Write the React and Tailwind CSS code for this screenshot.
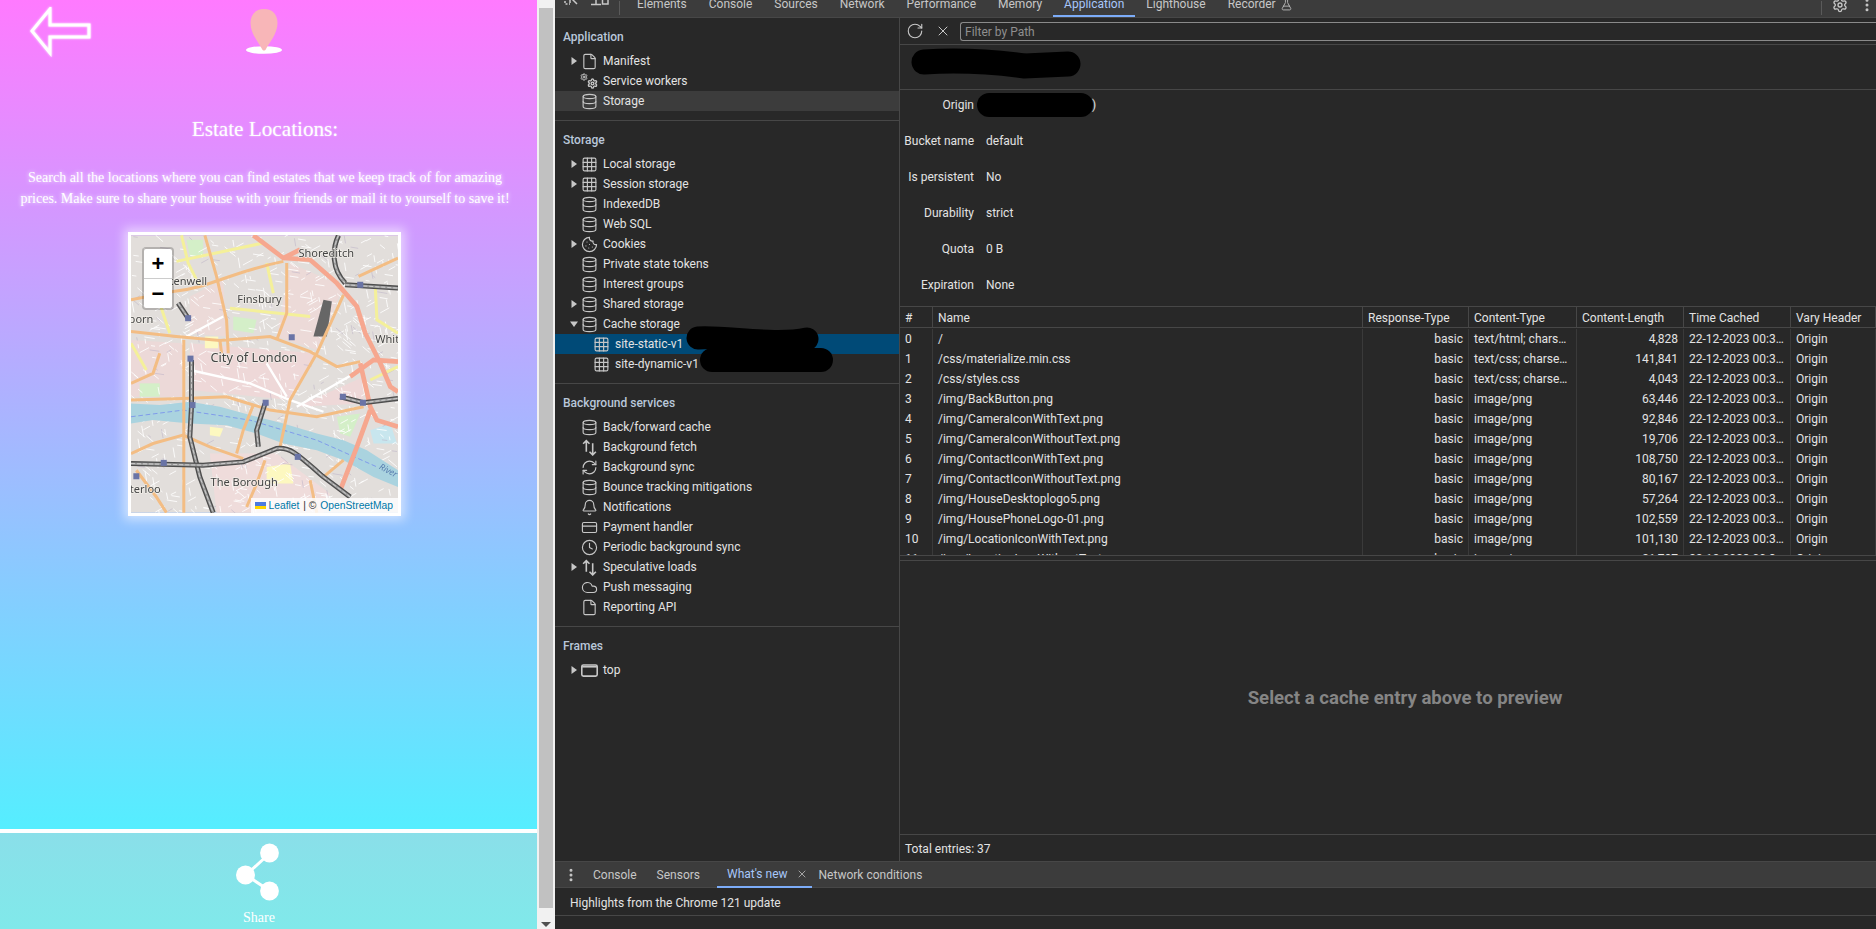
import React from 'react';
import {
    Database, Grid3x3, File, Cookie, Bell, CreditCard, Clock, Cloud, RefreshCw,
    Settings, EllipsisVertical, RotateCw, X, FlaskConical,
} from 'lucide-react';

// left page: back arrow and location pin are pictures in the original
const BackArrow = () => (
    <svg width="62" height="50" viewBox="0 0 62 50" className="drop-shadow-[0_0_1px_white]">
        <path d="M2 24 L20 2 L20 18 L59 18 L59 30 L20 30 L20 46 Z" fill="none" stroke="white" strokeWidth="3" />
    </svg>
);

const Pin = () => (
    <svg width="38" height="46" viewBox="0 0 38 46">
        <ellipse cx="19" cy="41" rx="18" ry="3.8" fill="white" />
        <path d="M19 0 C28 0 32.5 6 32.5 14 C32.5 25 24 34 21 40 C20 42 18 42 17 40 C14 34 5.5 25 5.5 14 C5.5 6 10 0 19 0 Z" fill="#f8b6b8" />
    </svg>
);

const ShareIcon = () => (
    <svg width="46" height="60" viewBox="0 0 46 60">
        <path d="M10 32 L34 10 M10 32 L34 48" stroke="white" strokeWidth="3" />
        <circle cx="33.5" cy="10" r="9.4" fill="white" />
        <circle cx="9.5" cy="32" r="9.5" fill="white" />
        <circle cx="33.5" cy="48" r="9.4" fill="white" />
    </svg>
);

// tile picture, drawn in the coordinates of a 3x crop of the map
const ORANGE = [
    'M64 335 L200 350 L330 362 L480 350 L600 395 L680 440 L750 425',
    'M64 240 L190 215 C300 205 350 160 520 125',
    'M285 47 L320 170 L350 300 L355 400',
    'M530 130 L530 280 L500 360',
    'M700 225 L620 400 L540 540 L510 680',
    'M64 540 L220 535 L350 530 L480 570 L620 590 L760 560',
    'M430 555 L400 630 L380 700',
    'M222 360 L222 877',
    'M64 700 L130 670 L220 645 L300 680 L400 715',
    'M150 400 L130 460 L64 490',
    'M465 720 L440 790 L410 860',
    'M80 750 L140 830 L170 877',
    'M600 780 L620 877',
    'M745 170 L863 115',
    'M330 360 L335 400',
    'M700 720 L640 770',
];
const YELLOW = [
    'M215 47 L235 130 L270 200',
    'M200 125 L460 70',
    'M470 130 L490 220',
    'M360 265 L600 290',
    'M795 200 L800 300 L863 340',
    'M150 250 L180 340',
    'M64 370 L110 450',
    'M780 480 L863 440',
];
const SALMON = [
    'M430 47 L520 115 L600 120 L680 190 L740 260 L765 340 L810 430 L840 500 L863 515',
    'M863 425 L790 420 L720 470',
    'M750 430 L780 560 L800 600 L863 620',
    'M780 570 L740 680 L690 810',
    'M520 115 L570 90',
];
const RAIL = [
    'M685 47 C665 90 665 150 705 190',
    'M705 195 L863 205',
    'M205 250 L235 295',
    'M245 420 L245 560 L240 650 L270 770 L310 877',
    'M64 730 L160 732 L280 735 L400 725 L500 685 C540 680 560 700 640 770 L720 830',
    'M465 550 L440 630 L445 680',
    'M690 530 L760 548 L863 535',
];
const STATIONS = [[750, 195], [235, 295], [545, 352], [242, 416], [248, 555], [467, 548], [698, 530], [758, 548], [563, 710], [162, 728], [80, 768]];
const PATCHES = [
    ['#ecd9d8', 'M64 360 L220 370 L220 530 L64 530 Z'],
    ['#eed8d8', 'M240 370 L620 400 L540 540 L240 510 Z'],
    ['#ecdad8', 'M540 130 L700 200 L620 390 L500 350 Z'],
    ['#ecdad8', 'M240 230 L340 180 L350 350 L240 340 Z'],
    ['#eed8d8', 'M560 560 L760 470 L760 550 Z'],
    ['#efdcdb', 'M300 700 L500 700 L660 820 L640 877 L320 877 Z'],
    ['#d4efc8', 'M680 590 L750 580 L720 650 L690 640 Z'],
    ['#d4efc8', 'M370 290 L440 300 L430 340 L370 330 Z'],
    ['#d4efc8', 'M90 490 L150 490 L150 530 L90 530 Z'],
    ['#d4efc8', 'M230 60 L280 60 L280 110 L240 110 Z'],
    ['#fdf8c0', 'M470 740 L540 730 L550 790 L470 790 Z'],
    ['#fdf8c0', 'M285 350 L325 350 L325 385 L285 385 Z'],
    ['#fdf8c0', 'M300 620 L340 625 L330 650 L300 645 Z'],
    ['#c8e6ee', 'M780 630 L840 610 L860 670 L790 670 Z'],
];

// fixed little street net, same every run
const makeStreets = () => {
    let seed = 17;
    const rnd = () => {
        seed = (seed * 16807) % 2147483647;
        return seed / 2147483647;
    };
    const lines = [];
    for (let i = 0; i < 800; i++) {
        const x = 64 + rnd() * 799;
        const y = 47 + rnd() * 830;
        const len = 10 + rnd() * 24;
        const a = [0.15, 1.4, 0.7, -0.5][Math.floor(rnd() * 4)];
        lines.push(`M${x.toFixed(0)} ${y.toFixed(0)} l${(Math.cos(a) * len).toFixed(0)} ${(Math.sin(a) * len).toFixed(0)}`);
    }
    return lines;
};
const STREETS = makeStreets();
const RIVER = 'M64 550 L150 555 L240 545 L330 560 L420 585 L520 610 L620 640 L700 660 L770 690 L863 750 L863 800 L790 770 L700 720 L620 690 L520 670 L440 640 L350 615 L240 610 L130 600 L64 610 Z';

const MapLabel = ({ x, y, size = 33, children }) => (
    <text x={x} y={y} fontSize={size} fill="#444" stroke="#f2efe9" strokeWidth="4" paintOrder="stroke" fontFamily="'Noto Sans', sans-serif">{children}</text>
);

const MapTiles = () => (
    <svg viewBox="64 47 799 830" className="block w-[267px] h-[278px] blur-[0.35px]">
        <rect x="64" y="47" width="799" height="830" fill="#e2dedb" />
        {PATCHES.map(([fill, d], i) => <path key={i} d={d} fill={fill} />)}
        {STREETS.map((d, i) => {
            const footpath = i % 9 === 0;
            return <path key={i} d={d} stroke={footpath ? '#b9aec4' : 'white'} strokeWidth={footpath ? 1.5 : 2.5} fill="none" />;
        })}
        <path d={RIVER} fill="#aad3df" />
        <path d="M64 590 L220 570 L420 600 L620 660 L800 740" fill="none" stroke="#6b7ff0" strokeWidth="2" strokeDasharray="14 8" />
        <path d="M230 350 L340 290 M240 450 L420 490 L540 540 L640 575 M560 560 L750 450 M470 430 L530 530" stroke="white" strokeWidth="7" fill="none" />
        <path d="M610 350 L640 240 L665 245 L650 350 Z" fill="#666" />
        {YELLOW.map((d, i) => <path key={i} d={d} fill="none" stroke="#f4f09a" strokeWidth="9" />)}
        {ORANGE.map((d, i) => <path key={i} d={d} fill="none" stroke="#f3bd84" strokeWidth="9" />)}
        {SALMON.map((d, i) => <path key={i} d={d} fill="none" stroke="#f6a78f" strokeWidth="14" />)}
        {RAIL.map((d, i) => (
            <g key={i} fill="none">
                <path d={d} stroke="#4d4d4d" strokeWidth="15" />
                <path d={d} stroke="#9a9a9a" strokeWidth="7" />
                <path d={d} stroke="white" strokeWidth="1.5" strokeDasharray="12 6" />
            </g>
        ))}
        {STATIONS.map(([x, y], i) => <rect key={i} x={x - 9} y={y - 9} width="18" height="18" fill="#6a74a6" />)}
        <MapLabel x={565} y={112}>Shoreditch</MapLabel>
        <MapLabel x={112} y={195}>Clerkenwell</MapLabel>
        <MapLabel x={382} y={250}>Finsbury</MapLabel>
        <MapLabel x={4} y={310}>Holborn</MapLabel>
        <MapLabel x={302} y={426} size={38}>City of London</MapLabel>
        <MapLabel x={795} y={370}>Whitechapel</MapLabel>
        <MapLabel x={302} y={798}>The Borough</MapLabel>
        <MapLabel x={12} y={818}>Waterloo</MapLabel>
        <text x={805} y={745} fontSize="26" fontStyle="italic" fill="#5a7fb0" fontFamily="'Noto Sans', sans-serif" transform="rotate(28 805 745)">River</text>
    </svg>
);

const LeftPage = () => (
    <div className="w-[537px] h-full flex flex-col font-['Liberation_Serif',serif] text-white">
        <div className="flex-1 bg-linear-to-b/srgb from-[#ff7aff] to-[#55eeff] shadow-[0_1px_5px_2px_white] flex flex-col">
            <div className="flex h-[56px] pl-[30px] pt-[7px]">
                <BackArrow />
                <div className="ml-[153px] mt-[2px]"><Pin /></div>
            </div>
            <h1 className="mt-[61px] w-[530px] text-center text-[21.2px] leading-6 [text-shadow:0_0_2px_rgba(255,255,255,0.6)]">Estate Locations:</h1>
            <p className="mt-[26px] w-[530px] text-center text-[14px] leading-[21px] [text-shadow:0_0_4px_white]">
                Search all the locations where you can find estates that we keep track of for amazing<br />
                prices. Make sure to share your house with your friends or mail it to yourself to save it!
            </p>
            <div className="relative mt-[23px] ml-[128px] w-[273px] h-[284px] border-[3px] border-white shadow-[0_0_10px_4px_rgba(255,255,255,0.55)]">
                <MapTiles />
                <div className="absolute left-[11px] top-[12px] w-[32px] rounded-[4px] bg-white border-2 border-black/20 bg-clip-padding font-['Liberation_Sans',sans-serif] font-bold text-black text-[22px]">
                    <div className="h-[30px] flex items-center justify-center border-b border-[#ccc]">+</div>
                    <div className="h-[29px] flex items-center justify-center">−</div>
                </div>
                <div className="absolute right-0 bottom-0 h-[15px] pl-[4px] pr-[5px] flex items-center gap-[1px] bg-white/80 font-['Liberation_Sans',sans-serif] text-[10.3px] text-[#333]">
                    <span className="inline-flex flex-col w-[11px] h-[7px] mr-[2px]">
                        <span className="h-1/2 bg-[#4c7be1]" />
                        <span className="h-1/2 bg-[#ffd500]" />
                    </span>
                    <span className="text-[#0078a8]">Leaflet</span>
                    <span>&nbsp;|&nbsp;©&nbsp;</span>
                    <span className="text-[#0078a8]">OpenStreetMap</span>
                </div>
            </div>
        </div>
        <div className="h-[100px] border-t-4 border-white bg-linear-to-b/srgb from-[#8adfe9] to-[#80e9ea] flex flex-col items-center">
            <div className="mr-[18px] -ml-[2px] mt-[10px]"><ShareIcon /></div>
            <span className="mr-[19px] mt-[5px] text-[14px] leading-5">Share</span>
        </div>
    </div>
);

const Scrollbar = () => (
    <div className="w-[18px] h-full bg-[#f1f1f1] flex flex-col items-center">
        <div className="h-[8px] w-full" />
        <div className="w-[14px] h-[900px] bg-[#c1c1c1]" />
        <div className="mt-[14px] w-0 h-0 border-x-[5px] border-x-transparent border-t-[5px] border-t-[#505050]" />
    </div>
);

// devtools side tree
const db = Database;
const grid = Grid3x3;

const Gears = () => (
    <span className="relative block w-[18px] h-[16px]">
        <Settings size={8} strokeWidth={3} className="absolute left-0 top-0 text-[#c7c7c7]" />
        <Settings size={11} strokeWidth={3} className="absolute right-0 bottom-0 text-[#c7c7c7]" />
    </span>
);

const UpDown = ({ size, className }) => (
    <svg width={size} height={size} viewBox="0 0 16 16" fill="none" stroke="currentColor" strokeWidth="1.5" className={className}>
        <path d="M5 12 V1.5 M2 4.5 L5 1.5 L8 4.5 M11 4 V15 M8 12 L11 15 L14 12" />
    </svg>
);

const FrameIcon = ({ size, className }) => (
    <svg width={size} height={size} viewBox="0 0 16 16" fill="none" stroke="currentColor" className={className}>
        <rect x="0.75" y="2.75" width="14.5" height="10.5" rx="1.5" strokeWidth="1.5" />
        <path d="M1 4.5 H15" strokeWidth="1.5" />
    </svg>
);

const Triangle = ({ open }) => (
    <svg width="8" height="8" viewBox="0 0 8 8" className="ml-[1px] text-[#c7c7c7]">
        <path d={open ? 'M0 1.5 L8 1.5 L4 7 Z' : 'M1.5 0 L7 4 L1.5 8 Z'} fill="currentColor" />
    </svg>
);

const TreeRow = ({ icon: Icon, label, arrow, open, nested, active, selected }) => (
    <div className={`h-5 flex items-center ${nested ? 'pl-[26px]' : 'pl-[14px]'} ${active ? 'bg-[#3c3c3c]' : ''} ${selected ? 'bg-[#004a77]' : ''}`}>
        <span className="w-[10px] flex">{arrow && <Triangle open={open} />}</span>
        <span className="w-[20px] flex justify-center">
            {Icon === 'gears' ? <Gears /> : <Icon size={17} strokeWidth={1.6} className="text-[#c7c7c7]" />}
        </span>
        <span className="ml-[4px] text-[#e3e3e3] whitespace-nowrap">{label}</span>
    </div>
);

const TreeSection = ({ title, rows, last }) => (
    <div className={`pt-[9px] pb-[9px] ${last ? '' : 'border-b border-[#474747]'}`}>
        <div className="h-5 mb-1 pl-2 flex items-center font-medium text-[#b9c7da]">{title}</div>
        {rows.map((row) => <TreeRow key={row.label} {...row} />)}
    </div>
);

const SECTIONS = [
    {
        title: 'Application',
        rows: [
            { icon: File, label: 'Manifest', arrow: true },
            { icon: 'gears', label: 'Service workers' },
            { icon: db, label: 'Storage', active: true },
        ],
    },
    {
        title: 'Storage',
        rows: [
            { icon: grid, label: 'Local storage', arrow: true },
            { icon: grid, label: 'Session storage', arrow: true },
            { icon: db, label: 'IndexedDB' },
            { icon: db, label: 'Web SQL' },
            { icon: Cookie, label: 'Cookies', arrow: true },
            { icon: db, label: 'Private state tokens' },
            { icon: db, label: 'Interest groups' },
            { icon: db, label: 'Shared storage', arrow: true },
            { icon: db, label: 'Cache storage', arrow: true, open: true },
            { icon: grid, label: 'site-static-v1', nested: true, selected: true },
            { icon: grid, label: 'site-dynamic-v1', nested: true },
        ],
    },
    {
        title: 'Background services',
        rows: [
            { icon: db, label: 'Back/forward cache' },
            { icon: UpDown, label: 'Background fetch' },
            { icon: RefreshCw, label: 'Background sync' },
            { icon: db, label: 'Bounce tracking mitigations' },
            { icon: Bell, label: 'Notifications' },
            { icon: CreditCard, label: 'Payment handler' },
            { icon: Clock, label: 'Periodic background sync' },
            { icon: UpDown, label: 'Speculative loads', arrow: true },
            { icon: Cloud, label: 'Push messaging' },
            { icon: File, label: 'Reporting API' },
        ],
    },
];

const Sidebar = () => (
    <aside className="w-[345px] border-r border-[#474747] shrink-0">
        {SECTIONS.map((section) => <TreeSection key={section.title} {...section} />)}
        <TreeSection title="Frames" last rows={[{ icon: FrameIcon, label: 'top', arrow: true }]} />
    </aside>
);

const TopTabs = () => (
    <div className="h-[18px] border-b border-[#474747] bg-[#3c3c3c] flex items-end overflow-hidden text-[#c7c7c7]">
        <div className="w-[9px]" />
        <svg width="15" height="17" viewBox="0 0 15 17" className="mb-[6px]" fill="none" stroke="currentColor" strokeWidth="1.5">
            <path d="M1 0 V10 H6" strokeDasharray="2 1.5" />
            <path d="M6 3 L13 10 M6 3 H12 M6 3 V9" />
        </svg>
        <svg width="18" height="17" viewBox="0 0 18 17" className="ml-[12px] mb-[6px]" fill="none" stroke="currentColor" strokeWidth="1.5">
            <path d="M0 10.5 H10 M5 0 V10" />
            <rect x="11.5" y="2" width="5.5" height="8" />
        </svg>
        <div className="ml-[10px] mb-[2px] h-[14px] border-l border-[#5a5a5a]" />
        <div className="ml-[6px] flex items-end">
            {['Elements', 'Console', 'Sources', 'Network', 'Performance', 'Memory', 'Application', 'Lighthouse', 'Recorder'].map((tab) => (
                <div key={tab} className={`h-6 px-[11px] flex items-center gap-1 border-b-2 ${tab === 'Application' ? 'border-[#7cacf8] text-[#a8c7fa]' : 'border-transparent'}`}>
                    {tab}
                    {tab === 'Recorder' && <FlaskConical size={13} strokeWidth={1.5} />}
                </div>
            ))}
        </div>
        <div className="ml-auto mb-[2px] h-[14px] border-l border-[#5a5a5a]" />
        <Settings size={16} strokeWidth={2} className="ml-[10px] mb-[4px]" />
        <EllipsisVertical size={16} strokeWidth={2.5} className="ml-[11px] mr-[1px] mb-[4px]" />
    </div>
);

const INFO = [
    ['Origin', ''],
    ['Bucket name', 'default'],
    ['Is persistent', 'No'],
    ['Durability', 'strict'],
    ['Quota', '0 B'],
    ['Expiration', 'None'],
];

const COLUMNS = 'grid grid-cols-[33px_430px_106px_108px_107px_107px_1fr]';
const CELL = 'px-[5px] truncate border-r border-[#3a3a3a]';

const ENTRIES = [
    ['/', 'text/html; charse...', '4,828'],
    ['/css/materialize.min.css', 'text/css; charset...', '141,841'],
    ['/css/styles.css', 'text/css; charset...', '4,043'],
    ['/img/BackButton.png', 'image/png', '63,446'],
    ['/img/CameraIconWithText.png', 'image/png', '92,846'],
    ['/img/CameraIconWithoutText.png', 'image/png', '19,706'],
    ['/img/ContactIconWithText.png', 'image/png', '108,750'],
    ['/img/ContactIconWithoutText.png', 'image/png', '80,167'],
    ['/img/HouseDesktoplogo5.png', 'image/png', '57,264'],
    ['/img/HousePhoneLogo-01.png', 'image/png', '102,559'],
    ['/img/LocationIconWithText.png', 'image/png', '101,130'],
    ['/img/LocationIconWithoutText.png', 'image/png', '21,727'],
];

const CacheTable = () => (
    <div className="h-[250px] border-y border-[#474747] overflow-hidden">
        <div className={`${COLUMNS} h-[21px] items-center border-b border-[#474747]`}>
            {['#', 'Name', 'Response-Type', 'Content-Type', 'Content-Length', 'Time Cached', 'Vary Header'].map((head) => (
                <div key={head} className={`${CELL} h-full pt-[1px] flex items-center border-[#474747]`}>{head}</div>
            ))}
        </div>
        <div className="pt-[1px]">
            {ENTRIES.map(([name, type, length], i) => (
                <div key={name} className={`${COLUMNS} h-5 leading-5`}>
                    <div className={CELL}>{i}</div>
                    <div className={CELL}>{name}</div>
                    <div className={`${CELL} text-right`}>basic</div>
                    <div className={CELL}>{type}</div>
                    <div className={`${CELL} text-right`}>{length}</div>
                    <div className={CELL}>22-12-2023 00:3...</div>
                    <div className={CELL}>Origin</div>
                </div>
            ))}
        </div>
    </div>
);

const MainPane = () => (
    <main className="flex-1 min-w-0 flex flex-col">
        <div className="h-[27px] border-b border-[#474747] flex items-center">
            <RotateCw size={18} strokeWidth={1.5} className="ml-[6px] text-[#c7c7c7]" />
            <X size={16} strokeWidth={1.5} className="ml-[11px] text-[#c7c7c7]" />
            <div className="ml-[9px] flex-1 h-[19px] border border-[#8a8a8a] border-r-0 rounded-l-[3px] pl-[4px] leading-[19px] text-[#8f8f8f]">Filter by Path</div>
        </div>
        <div className="h-[45px] border-b border-[#474747]" />
        <div className="h-[216px] pt-[5px] flex flex-col gap-4">
            {INFO.map(([label, value]) => (
                <div key={label} className="h-5 flex items-center">
                    <span className="w-[74px] text-right">{label}</span>
                    <span className="ml-[12px]">{value}</span>
                    {label === 'Origin' && <span className="ml-[106px]">)</span>}
                </div>
            ))}
        </div>
        <CacheTable />
        <div className="h-[5px] bg-[#282828] border-b border-[#474747]" />
        <div className="flex-1 flex items-center justify-center pl-[34px] pt-[2px] text-[18.6px] font-bold text-[#858585]">Select a cache entry above to preview</div>
        <div className="h-[27px] border-t border-[#474747] pl-[5px] pt-[1px] flex items-center">Total entries: 37</div>
    </main>
);

const Drawer = () => (
    <div className="h-[68px] shrink-0">
        <div className="h-[27px] bg-[#3c3c3c] border-y border-[#474747] flex items-center text-[#c7c7c7]">
            <EllipsisVertical size={16} strokeWidth={2.5} className="ml-[8px]" />
            <span className="ml-[14px]">Console</span>
            <span className="ml-[20px]">Sensors</span>
            <div className="ml-[17px] h-[26px] pl-[10px] pr-[4px] flex items-center gap-[8px] border-b-2 border-[#7cacf8] text-[#a8c7fa]">
                What's new
                <X size={12} strokeWidth={1.5} className="text-[#c7c7c7]" />
            </div>
            <span className="ml-[7px]">Network conditions</span>
        </div>
        <div className="h-[28px] border-b border-[#474747] pl-[15px] pt-[2px] flex items-center">Highlights from the Chrome 121 update</div>
    </div>
);

// marker scribbles over the private bits of the screenshot
const Redactions = () => (
    <svg className="absolute inset-0 w-full h-full pointer-events-none" fill="none" stroke="black" strokeLinecap="round">
        <path d="M143 338 C170 336 220 346 252 339" strokeWidth="23" />
        <path d="M157 360 L266 360" strokeWidth="24" />
        <path d="M369 62 C400 60 440 62 470 66 L513 64" strokeWidth="25" />
        <path d="M434 105 L526 105" strokeWidth="24" />
    </svg>
);

const DevTools = () => (
    <div className="relative flex-1 min-w-0 flex flex-col bg-[#282828] text-[#e3e3e3] text-[12px] font-['Roboto',sans-serif]">
        <TopTabs />
        <div className="flex-1 min-h-0 flex">
            <Sidebar />
            <MainPane />
        </div>
        <Drawer />
        <Redactions />
    </div>
);

export default function App() {
    return (
        <div className="w-[1876px] h-[929px] overflow-hidden flex">
            <LeftPage />
            <Scrollbar />
            <DevTools />
        </div>
    );
}
